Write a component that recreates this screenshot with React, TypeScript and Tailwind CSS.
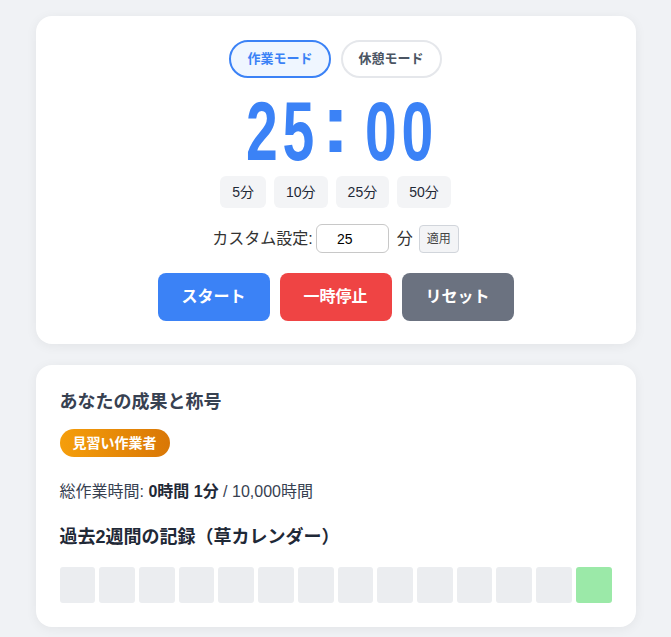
import React from "react";

const days = Array.from({ length: 14 }, (_, i) => i === 13);

export default function App() {
  return (
    <div
      className="min-h-[637px] w-full bg-[#f0f2f5] pt-4 pb-4"
      style={{ fontFamily: '"Liberation Sans", "Noto Sans CJK JP", sans-serif' }}
    >
      <div className="mx-auto flex w-[600px] flex-col gap-[21px]">
        {/* Timer card */}
        <div className="flex flex-col items-center rounded-2xl bg-white px-6 pt-6 pb-[23px] shadow-[0_2px_12px_rgba(0,0,0,0.06)]">
          <div className="flex gap-[10px]">
            <button className="h-[38px] rounded-full border-2 border-[#3b82f6] bg-[#eff6ff] px-4 text-[13px] font-bold text-[#3b82f6]">
              作業モード
            </button>
            <button className="h-[38px] rounded-full border-2 border-[#e5e7eb] bg-white px-4 text-[13px] font-bold text-[#4b5563]">
              休憩モード
            </button>
          </div>

          <div className="ml-[4px] mt-[11px] flex h-[84px] items-end text-[84px] font-bold leading-[84px] text-[#3b82f6]">
            <span className="inline-block w-[71px] whitespace-nowrap">
              <span className="inline-block origin-left scale-x-[0.68] tracking-[7px]">25</span>
            </span>
            <span className="ml-[5px] mr-[16px] inline-block pb-[8px] leading-[84px]">:</span>
            <span className="inline-block w-[64px] whitespace-nowrap">
              <span className="inline-block origin-left scale-x-[0.68] tracking-[7px]">00</span>
            </span>
          </div>

          <div className="mt-[3px] flex gap-2">
            {["5分", "10分", "25分", "50分"].map((t) => (
              <button
                key={t}
                className="h-8 rounded-md bg-[#f3f4f6] px-3 text-sm text-[#1f2937]"
              >
                {t}
              </button>
            ))}
          </div>

          <div className="mt-4 flex items-center text-base text-[#333]">
            <span>カスタム設定:</span>
            <input
              type="text"
              defaultValue="25"
              className="ml-[3px] h-[29px] w-[73px] rounded-md border border-[#c8c8c8] pr-[15px] text-center text-sm text-black outline-none"
            />
            <span className="ml-2">分</span>
            <button className="ml-[6px] h-[28px] rounded border border-[#d1d5db] bg-[#f3f4f6] px-[7px] text-xs text-[#444]">
              適用
            </button>
          </div>

          <div className="mt-5 flex gap-[10px]">
            <button className="h-12 w-[112px] rounded-lg bg-[#3b82f6] text-base font-bold text-white">
              スタート
            </button>
            <button className="h-12 w-[112px] rounded-lg bg-[#ef4444] text-base font-bold text-white">
              一時停止
            </button>
            <button className="h-12 w-[112px] rounded-lg bg-[#6b7280] text-base font-bold text-white">
              リセット
            </button>
          </div>
        </div>

        {/* Stats card */}
        <div className="rounded-2xl bg-white px-6 pt-6 pb-6 shadow-[0_2px_12px_rgba(0,0,0,0.06)]">
          <h2 className="text-lg font-bold leading-[27px] text-[#374151]">あなたの成果と称号</h2>
          <div className="mt-[13px]">
            <span className="inline-flex h-7 items-center rounded-full bg-gradient-to-r from-[#f59e0b] to-[#d97706] px-[13px] text-sm font-bold text-white">
              見習い作業者
            </span>
          </div>
          <p className="mt-[23px] text-base leading-6 text-[#374151]">
            総作業時間: <strong className="font-bold text-[#1f2937]">0時間 1分</strong> / 10,000時間
          </p>
          <h3 className="mt-5 text-lg font-bold leading-[27px] text-[#1f2937]">
            過去2週間の記録（草カレンダー）
          </h3>
          <div className="mt-4 flex gap-1">
            {days.map((active, i) => (
              <div
                key={i}
                className={
                  active
                    ? "h-9 flex-1 rounded-[3px] bg-[#9be9a8]"
                    : "h-9 flex-1 rounded-[3px] bg-[#ebedf0]"
                }
              />
            ))}
          </div>
        </div>
      </div>
    </div>
  );
}
